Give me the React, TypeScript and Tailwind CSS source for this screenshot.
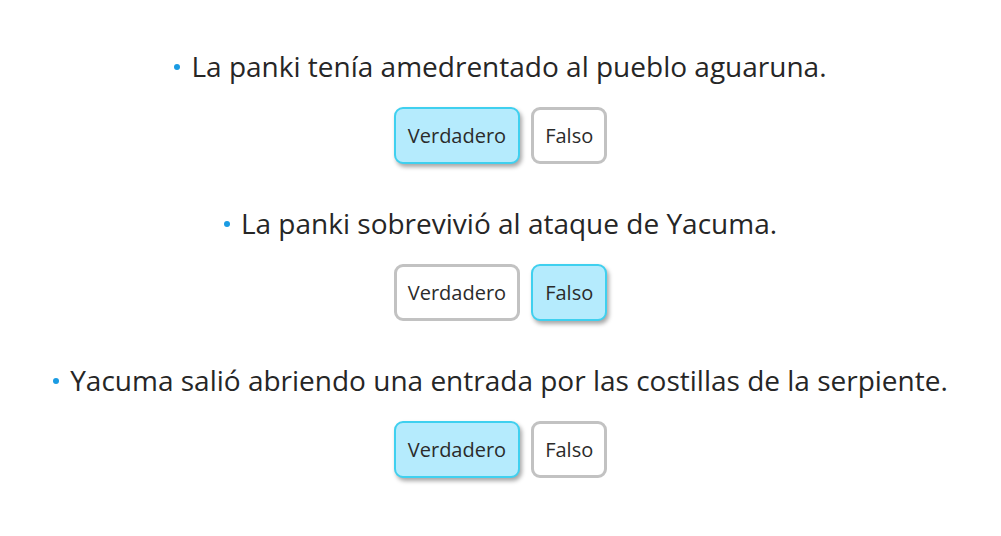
import { useState } from "react";

const preguntas = [
  { texto: "La panki tenía amedrentado al pueblo aguaruna.", respuesta: "v" },
  { texto: "La panki sobrevivió al ataque de Yacuma.", respuesta: "f" },
  { texto: "Yacuma salió abriendo una entrada por las costillas de la serpiente.", respuesta: "v" },
];

function Opcion({ label, activo, onClick }: { label: string; activo: boolean; onClick: () => void }) {
  return (
    <button
      onClick={onClick}
      className={
        activo
          ? "h-[57px] px-[12px] rounded-[9px] border-2 border-[#3fd0ef] bg-[#b5ebfd] text-[20px] text-[#2b2b2b] shadow-[2px_3px_4px_rgba(0,0,0,0.35)]"
          : "h-[57px] px-[11px] rounded-[9px] border-[3px] border-[#c2c2c2] bg-white text-[20px] text-[#2b2b2b]"
      }
    >
      {label}
    </button>
  );
}

export default function App() {
  const [resp, setResp] = useState(preguntas.map((p) => p.respuesta));

  const elegir = (i: number, v: string) => {
    const nuevo = [...resp];
    nuevo[i] = v;
    setResp(nuevo);
  };

  return (
    <div
      className="min-h-screen bg-white pt-[48px] flex flex-col items-center text-[#262626]"
      style={{ fontFamily: '"Open Sans", "Noto Sans", sans-serif' }}
    >
      {preguntas.map((p, i) => (
        <div key={i} className="flex flex-col items-center mb-[41px]">
          <p className="flex items-center text-[28px] leading-[36px]">
            <span className="inline-block w-[6px] h-[6px] rounded-full bg-[#1a9be3] mr-[11px] mt-[2px]" />
            {p.texto}
          </p>
          <div className="flex gap-[11px] mt-[23px]">
            <Opcion label="Verdadero" activo={resp[i] === "v"} onClick={() => elegir(i, "v")} />
            <Opcion label="Falso" activo={resp[i] === "f"} onClick={() => elegir(i, "f")} />
          </div>
        </div>
      ))}
    </div>
  );
}
